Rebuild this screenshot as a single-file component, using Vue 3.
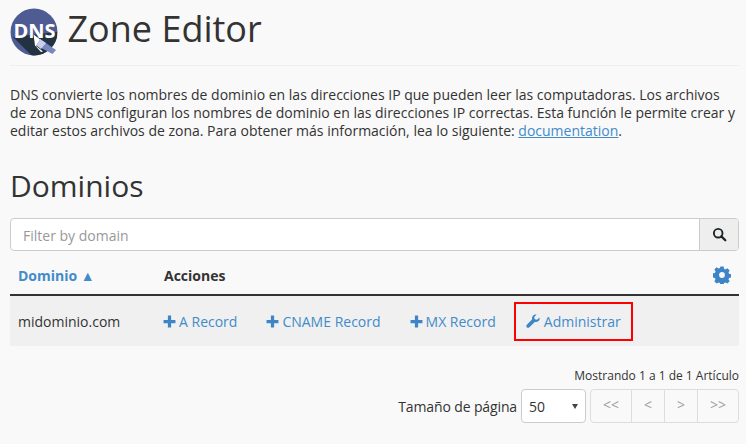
<script setup>
const actions = [
  { label: 'A Record' },
  { label: 'CNAME Record' },
  { label: 'MX Record' }
]
const pages = ['<<', '<', '>', '>>']
</script>

<template>
  <div class="page">
    <header class="head">
      <svg class="logo" viewBox="0 0 48 48" width="48" height="48">
        <defs><clipPath id="c"><circle cx="24" cy="24" r="23.5" /></clipPath></defs>
        <circle cx="24" cy="24" r="23.5" fill="#4f5b93" />
        <g clip-path="url(#c)">
          <path d="M3 29 L47 24 L48 48 L22 48 Z" fill="#223240" />
        </g>
        <text x="24.5" y="29.5" text-anchor="middle" class="logo-text">DNS</text>
        <path d="M23.5 26.5 L31 32 L26 38 L33 43.5 L31 44 L25 37.5 Z" fill="#fff" />
        <path d="M30 31 L46 42 L42.5 46 L26.5 37.5 Z" fill="#7b86c0" />
        <path d="M30 31 L36 35 L31 41 L26.5 37.5 Z" fill="#c9cfe8" />
      </svg>
      <h1>Zone Editor</h1>
    </header>
    <p class="desc">DNS convierte los nombres de dominio en las direcciones IP que pueden leer las computadoras. Los archivos de zona DNS configuran los nombres de dominio en las direcciones IP correctas. Esta función le permite crear y editar estos archivos de zona. Para obtener más información, lea lo siguiente: <a class="doc">documentation</a>.</p>
    <h2>Dominios</h2>
    <div class="search">
      <div class="input">Filter by domain</div>
      <div class="btn">
        <svg viewBox="0 0 16 16" width="15" height="15"><circle cx="6.6" cy="6.6" r="4.6" fill="none" stroke="#1d2327" stroke-width="2" /><path d="M10 10 L14.2 14.2" stroke="#1d2327" stroke-width="2.4" stroke-linecap="round" /></svg>
      </div>
    </div>
    <div class="thead">
      <div class="col-a sort">Dominio ▲</div>
      <div class="col-b">Acciones</div>
      <svg class="gear" viewBox="0 0 20 20" width="18" height="18"><path fill="#3d85c6" fill-rule="evenodd" d="M8.2 0.6h3.6l.5 2.5 1.5.7 2.2-1.3 2.5 2.5-1.3 2.2.7 1.5 2.5.5v3.6l-2.5.5-.7 1.5 1.3 2.2-2.5 2.5-2.2-1.3-1.5.7-.5 2.5H8.2l-.5-2.5-1.5-.7-2.2 1.3-2.5-2.5 1.3-2.2-.7-1.5-2.5-.5V8.2l2.5-.5.7-1.5-1.3-2.2 2.5-2.5 2.2 1.3 1.5-.7zM10 6.8a3.2 3.2 0 1 0 0 6.4 3.2 3.2 0 0 0 0-6.4z" /></svg>
    </div>
    <div class="row">
      <div class="col-a">midominio.com</div>
      <div class="col-b actions">
        <a v-for="a in actions" :key="a.label" class="act">
          <svg viewBox="0 0 12 12" width="13" height="13"><path fill="#3d85c6" d="M4.5 0.5h3v4h4v3h-4v4h-3v-4h-4v-3h4z" /></svg>
          {{ a.label }}
        </a>
        <a class="act manage">
          <svg viewBox="0 0 14 14" width="14" height="14"><path fill="#3d85c6" d="M13.6 3.4c.3 1.6-.2 3-1.4 3.9-1 .8-2.2 1-3.4.6L3.4 13.2c-.8.8-1.9.8-2.6.1-.7-.7-.7-1.8.1-2.6L6.2 5.3c-.4-1.2-.2-2.5.6-3.4C7.7.7 9.1.2 10.6.5L8.2 3l.5 2.2 2.3.5z" /></svg>
          Administrar
        </a>
      </div>
    </div>
    <div class="info">Mostrando 1 a 1 de 1 Artículo</div>
    <div class="pager">
      <span class="size-label">Tamaño de página</span>
      <div class="select"><span>50</span><i class="caret"></i></div>
      <div class="pages">
        <div v-for="p in pages" :key="p" class="pg">{{ p }}</div>
      </div>
    </div>
  </div>
</template>

<style>
html, body { margin: 0; background: #f9f9f9; }
</style>

<style scoped>
.page {
  width: 729px;
  height: 444px;
  margin-left: 10px;
  overflow: hidden;
  font-family: "Open Sans", sans-serif;
  font-size: 14px;
  color: #333;
}
.head {
  display: flex;
  align-items: center;
  gap: 9.5px;
  height: 66px;
  box-sizing: border-box;
  border-bottom: 1px solid #eee;
}
.logo { display: block; margin-top: -1px; }
.logo-text { font: 700 20px "Open Sans", sans-serif; fill: #fff; }
h1 {
  margin: -7px 0 0;
  font-size: 36px;
  font-weight: 400;
  line-height: 40px;
  color: #333;
}
.desc {
  margin: 19.6px 0 0;
  line-height: 18.4px;
  color: #333;
}
.doc { color: #428bca; text-decoration: underline; }
h2 {
  margin: 28.2px 0 0;
  font-size: 30px;
  font-weight: 400;
  line-height: 33px;
}
.search {
  display: flex;
  height: 33px;
  margin-top: 16px;
  box-sizing: border-box;
  border: 1px solid #ccc;
  border-radius: 4px;
  background: #fff;
}
.input {
  flex: 1;
  padding-left: 12px;
  line-height: 34px;
  color: #999;
}
.btn {
  width: 39px;
  box-sizing: border-box;
  display: flex;
  align-items: center;
  justify-content: center;
  background: #eee;
  border-left: 1px solid #ccc;
  border-radius: 0 3px 3px 0;
}
.thead {
  display: flex;
  align-items: center;
  height: 45px;
  box-sizing: border-box;
  padding-top: 5px;
  border-bottom: 2px solid #333;
  font-weight: 700;
}
.col-a { width: 154px; padding-left: 8px; box-sizing: border-box; flex: none; }
.sort { color: #428bca; }
.col-b { flex: 1; }
.gear { margin-right: 8px; }
.row {
  display: flex;
  align-items: center;
  height: 50px;
  background: #f0f0f0;
}
.actions { display: flex; align-items: center; margin-left: -1px; }
.act {
  display: flex;
  align-items: center;
  gap: 3px;
  color: #428bca;
  margin-right: 29px;
}
.manage {
  box-sizing: border-box;
  gap: 4px;
  height: 39px;
  margin-left: -11px;
  margin-right: 0;
  padding: 0 10px;
  border: 2px solid #f00;
}
.info {
  margin-top: 21px;
  text-align: right;
  font-size: 12px;
  line-height: 17px;
}
.pager {
  display: flex;
  justify-content: flex-end;
  align-items: center;
  margin-top: 5px;
}
.size-label { margin-right: 4px; letter-spacing: -0.13px; }
.select {
  box-sizing: border-box;
  width: 65px;
  height: 34px;
  display: flex;
  align-items: center;
  justify-content: space-between;
  padding: 0 7px;
  background: #fff;
  border: 1px solid #ccc;
  border-radius: 4px;
  margin-right: 4px;
}
.caret {
  width: 0;
  height: 0;
  border-left: 3.5px solid transparent;
  border-right: 3.5px solid transparent;
  border-top: 5px solid #444;
}
.pages {
  display: flex;
  height: 34px;
  box-sizing: border-box;
  border: 1px solid #ddd;
  border-radius: 4px;
}
.pg {
  box-sizing: border-box;
  width: 33px;
  line-height: 30px;
  text-align: center;
  color: #a0a0a0;
  border-left: 1px solid #ddd;
}
.pg:first-child { width: 40px; border-left: 0; }
.pg:last-child { width: 41px; }
</style>
